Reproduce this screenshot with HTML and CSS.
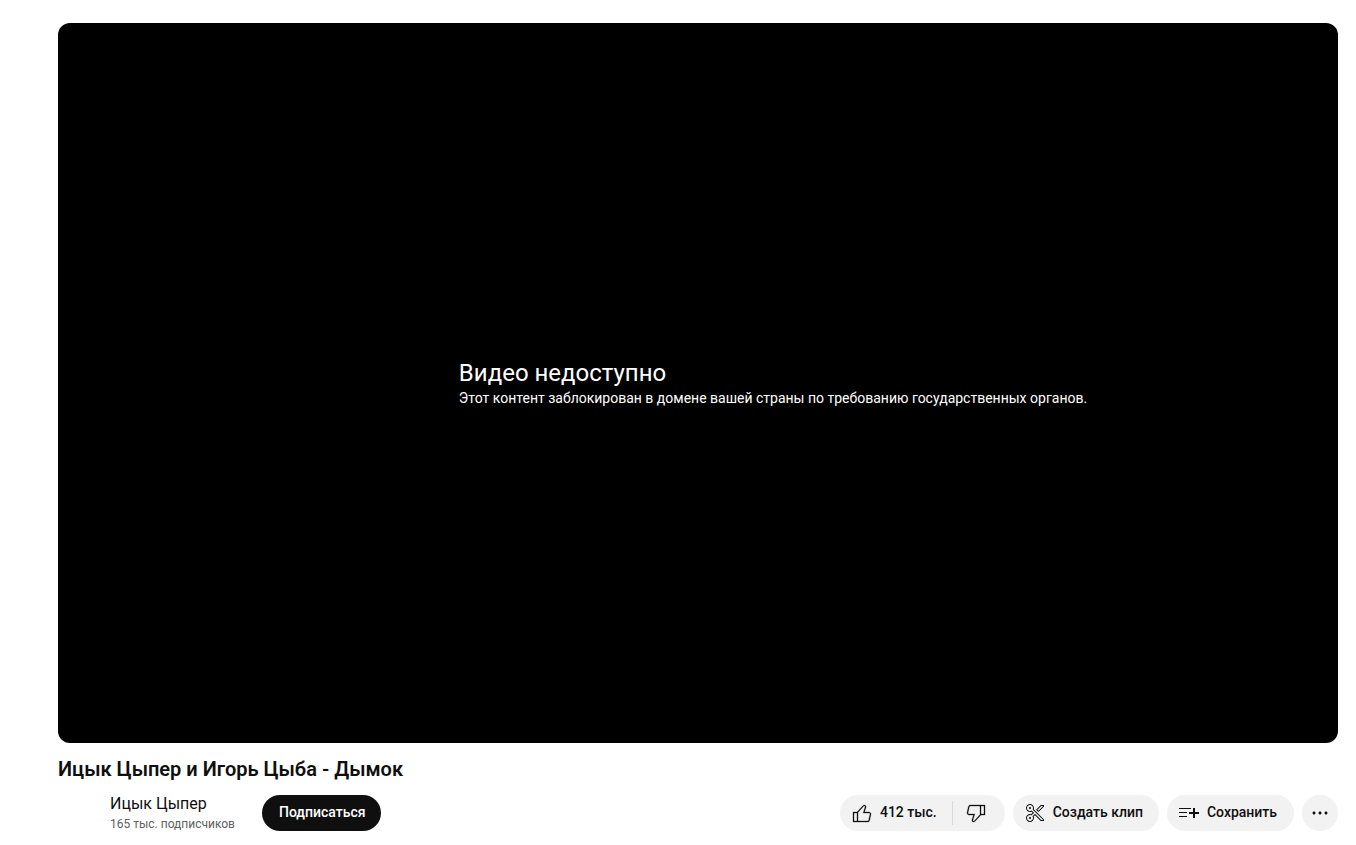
FILE: index.html
```html
<!DOCTYPE html>
<html lang="ru">
<head>
<meta charset="utf-8">
<title>Ицык Цыпер и Игорь Цыба - Дымок</title>
<link rel="stylesheet" href="styles.css">
</head>
<body>
<main class="watch">
  <section class="player">
    <div class="player-error">
      <div class="error-reason">Видео недоступно</div>
      <div class="error-detail">Этот контент заблокирован в домене вашей страны по требованию государственных органов.</div>
    </div>
  </section>
  <h1 class="title">Ицык Цыпер и Игорь Цыба - Дымок</h1>
  <div class="meta">
    <div class="owner">
      <div class="channel">
        <a class="channel-name" href="#">Ицык Цыпер</a>
        <span class="subscribers">165 тыс. подписчиков</span>
      </div>
      <button class="pill subscribe" type="button">Подписаться</button>
    </div>
    <div class="actions">
      <div class="rating">
        <button class="pill like" type="button">
          <svg class="icon thumb" viewBox="0 0 24 24"><path d="M18.77,11h-4.23l1.52-4.94C16.38,5.03,15.54,4,14.38,4c-0.58,0-1.14,0.24-1.52,0.65L7,11H3v10h4h1h9.43c1.06,0,1.98-0.67,2.19-1.61l1.34-6C21.23,12.15,20.18,11,18.77,11z M7,20H4v-8h3V20z M19.98,13.17l-1.34,6C18.54,19.65,18.03,20,17.43,20H8v-8.61l5.6-6.06C13.79,5.12,14.08,5,14.38,5c0.26,0,0.5,0.11,0.63,0.3c0.07,0.1,0.15,0.26,0.09,0.47l-1.52,4.94L13.18,12h1.35h4.23c0.41,0,0.8,0.17,1.03,0.46C19.92,12.61,20.05,12.86,19.98,13.17z"/></svg>
          <span class="label">412 тыс.</span>
        </button>
        <button class="pill dislike" type="button" aria-label="Не нравится">
          <svg class="icon thumb" viewBox="0 0 24 24"><path d="M17,4h-1H6.57C5.5,4,4.59,4.67,4.38,5.61l-1.34,6C2.77,12.85,3.82,14,5.23,14h4.23l-1.52,4.94C7.62,19.97,8.46,21,9.62,21c0.58,0,1.14-0.24,1.52-0.65L17,14h4V4H17z M10.4,19.67C10.21,19.88,9.92,20,9.62,20c-0.26,0-0.5-0.11-0.63-0.3c-0.07-0.1-0.15-0.26-0.09-0.47l1.52-4.94l0.4-1.29H9.46H5.23c-0.41,0-0.8-0.17-1.03-0.46c-0.12-0.15-0.25-0.4-0.18-0.72l1.34-6C5.46,5.35,5.97,5,6.57,5H16v8.61L10.4,19.67z M20,13h-3V5h3V13z"/></svg>
        </button>
      </div>
      <button class="pill action" type="button">
        <svg class="icon" viewBox="0 0 24 24"><path d="M8,7c0,0.55-0.45,1-1,1S6,7.55,6,7c0-0.55,0.45-1,1-1S8,6.45,8,7z M7,16c-0.55,0-1,0.45-1,1c0,0.55,0.45,1,1,1s1-0.45,1-1C8,16.45,7.55,16,7,16z M10.79,8.23L21,18.44V20h-3.27l-5.76-5.76l-1.27,1.27C10.89,15.97,11,16.47,11,17c0,2.21-1.79,4-4,4c-2.21,0-4-1.79-4-4c0-2.21,1.79-4,4-4c0.42,0,0.81,0.08,1.19,0.2l1.37-1.37l-1.11-1.11C8,10.89,7.51,11,7,11c-2.21,0-4-1.79-4-4c0-2.21,1.79-4,4-4c2.21,0,4,1.79,4,4C11,7.43,10.91,7.84,10.79,8.23z M10.08,8.94L9.65,8.5l0.19-0.58C9.95,7.58,10,7.28,10,7c0-1.65-1.35-3-3-3S4,5.35,4,7c0,1.65,1.35,3,3,3c0.36,0,0.73-0.07,1.09-0.21L8.7,9.55l0.46,0.46l1.11,1.11l0.71,0.71l-0.71,0.71L8.9,13.91l-0.43,0.43l-0.58-0.18C7.55,14.05,7.27,14,7,14c-1.65,0-3,1.35-3,3c0,1.65,1.35,3,3,3s3-1.35,3-3c0-0.38-0.07-0.75-0.22-1.12l-0.25-0.61L10,14.8l1.27-1.27l0.71-0.71l0.71,0.71L18.15,19H20v-0.15L10.08,8.94z M17.73,4H21v1.56l-5.52,5.52l-2.41-2.41L17.73,4z M18.15,5l-3.67,3.67l1,1L20,5.15V5H18.15z"/></svg>
        <span class="label">Создать клип</span>
      </button>
      <button class="pill action save" type="button">
        <svg class="icon" viewBox="0 0 24 24"><path d="M22,13h-4v4h-2v-4h-4v-2h4V7h2v4h4V13z M14,7H2v1h12V7z M2,12h8v-1H2V12z M2,16h8v-1H2V16z"/></svg>
        <span class="label">Сохранить</span>
      </button>
      <button class="pill more" type="button" aria-label="Ещё">
        <svg class="icon" viewBox="0 0 24 24"><path d="M7.5,12c0,0.83-0.67,1.5-1.5,1.5S4.5,12.83,4.5,12s0.67-1.5,1.5-1.5S7.5,11.17,7.5,12z M12,10.5c-0.83,0-1.5,0.67-1.5,1.5s0.67,1.5,1.5,1.5s1.5-0.67,1.5-1.5S12.83,10.5,12,10.5z M18,10.5c-0.83,0-1.5,0.67-1.5,1.5s0.67,1.5,1.5,1.5s1.5-0.67,1.5-1.5S18.83,10.5,18,10.5z"/></svg>
      </button>
    </div>
  </div>
</main>
</body>
</html>
```
FILE: styles.css
```css
* {
  box-sizing: border-box;
}

body {
  margin: 0;
  background: #fff;
  color: #0f0f0f;
  font-family: Roboto, "Liberation Sans", sans-serif;
}

.watch {
  padding: 23px 18px 14px 58px;
}

.player {
  display: flex;
  align-items: center;
  justify-content: center;
  aspect-ratio: 16 / 9;
  border-radius: 12px;
  background: #000;
  color: #fff;
}

.player-error {
  margin-left: 150px;
}

.error-reason {
  font-size: 24px;
  line-height: 30px;
}

.error-detail {
  font-size: 14px;
  line-height: 20px;
}

.title {
  margin: 12px 0 0;
  font-size: 20px;
  font-weight: 600;
  line-height: 28px;
}

.meta {
  display: flex;
  justify-content: space-between;
  margin-top: 10px;
}

.owner,
.actions {
  display: flex;
  align-items: center;
}

.owner {
  gap: 27px;
  padding-left: 52px;
}

.actions {
  gap: 8px;
}

.channel {
  display: flex;
  flex-direction: column;
}

.channel-name {
  color: inherit;
  font-size: 16px;
  line-height: 22px;
  text-decoration: none;
}

.subscribers {
  color: #606060;
  font-size: 12px;
  line-height: 18px;
}

.pill {
  display: flex;
  align-items: center;
  height: 36px;
  padding: 0 16px;
  border: 0;
  border-radius: 18px;
  background: #f2f2f2;
  color: #0f0f0f;
  font: 500 14px/20px Roboto, "Liberation Sans", sans-serif;
  white-space: nowrap;
}

.subscribe {
  padding: 0 16px 2px 17px;
  background: #0f0f0f;
  color: #fff;
}

.label {
  padding-bottom: 2px;
}

.icon {
  width: 24px;
  height: 24px;
  flex: none;
  fill: currentColor;
}

.thumb {
  stroke: currentColor;
  stroke-width: 0.3;
}

.rating {
  display: flex;
  border-radius: 18px;
  background: #f2f2f2;
}

.like,
.action {
  gap: 6px;
  padding-left: 10px;
}

.like,
.dislike {
  background: transparent;
}

.like {
  padding-right: 15px;
}

.dislike {
  position: relative;
  width: 53px;
  padding: 0 12px;
}

.dislike::before {
  content: "";
  position: absolute;
  left: 0;
  top: 6px;
  width: 1px;
  height: 24px;
  background: #d9d9d9;
}

.save {
  padding-right: 17px;
}

.more {
  padding: 0 6px;
}
```
